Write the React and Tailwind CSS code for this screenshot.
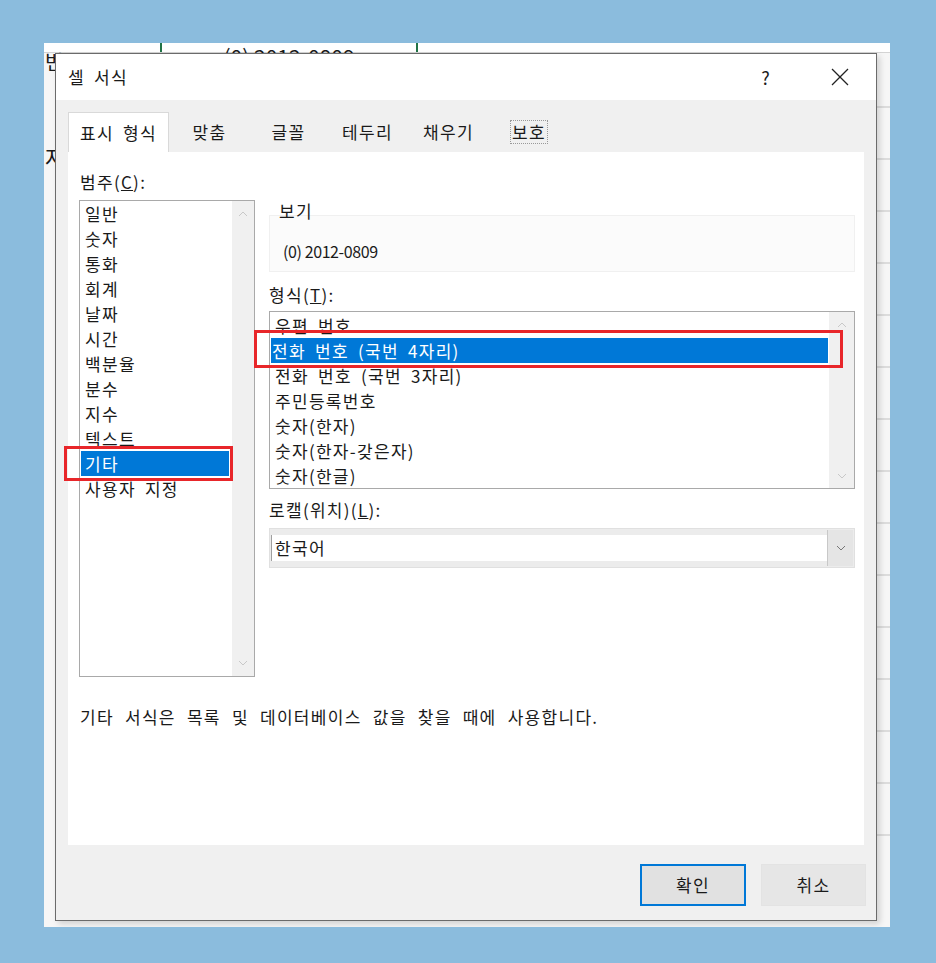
import React from "react";

const Chevron = ({ dir = "down", className = "" }) => (
  <svg width="10" height="6" viewBox="0 0 10 6" className={className}>
    {dir === "down" ? (
      <polyline points="1,1 5,5 9,1" fill="none" stroke="currentColor" strokeWidth="1" />
    ) : (
      <polyline points="1,5 5,1 9,5" fill="none" stroke="currentColor" strokeWidth="1" />
    )}
  </svg>
);

const categories = ["일반", "숫자", "통화", "회계", "날짜", "시간", "백분율", "분수", "지수", "텍스트", "기타", "사용자 지정"];
const formats = ["우편 번호", "전화 번호 (국번 4자리)", "전화 번호 (국번 3자리)", "주민등록번호", "숫자(한자)", "숫자(한자-갖은자)", "숫자(한글)"];

export default function App() {
  return (
    <div className="w-[936px] h-[963px] bg-[#8bbcdd] pt-[43px] pl-[44px] font-['Noto_Sans_CJK_KR','Noto_Sans',sans-serif] text-[17px] text-[#1a1a1a] tracking-[1.3px] [word-spacing:4px]">
      {/* Excel sheet behind */}
      <div className="relative w-[846px] h-[884px] bg-[#f6f6f6] overflow-hidden">
        <div className="flex h-[10px] bg-white border-b border-[#d4d4d4]">
          <div className="w-[118px] border-r border-[#d4d4d4] text-[20px] leading-[40px] pl-[1px] -mt-[1px]">번호</div>
          <div className="w-[258px] border-r-2 border-[#217346] border-l-2 border-l-[#217346] -ml-[2px] text-center text-[21px] leading-[26px] tracking-normal [word-spacing:0px]">(0) 2012-0809</div>
          <div className="flex-1"></div>
        </div>
        <div className="w-[11px] h-[88px]"></div>
        <div className="w-[11px] text-[22px] leading-[30px] pl-[1px]">자</div>
        <div className="flex flex-col gap-[50px] ml-[833px] mt-[-65px]">
          {[0, 1, 2, 3, 4, 5, 6, 7, 8, 9, 10, 11, 12, 13, 14].map((i) => (
            <div key={i} className="h-[2px] bg-[#dcdcdc]"></div>
          ))}
        </div>

        {/* Dialog */}
        <div className="absolute left-[11px] top-[10px] w-[822px] h-[868px] border border-[#6b6b6b] bg-[#f0f0f0] flex flex-col shadow-[3px_3px_6px_rgba(0,0,0,0.15)]">
          {/* Title bar */}
          <div className="h-[46px] bg-white flex items-center pl-[12px] shrink-0">
            <span className="leading-[22px]">셀 서식</span>
            <span className="ml-auto mr-[60px] text-[18px] leading-[22px]">?</span>
            <svg width="18" height="18" viewBox="0 0 18 18" className="mr-[27px]">
              <line x1="1" y1="1" x2="17" y2="17" stroke="#222" strokeWidth="1.3" />
              <line x1="17" y1="1" x2="1" y2="17" stroke="#222" strokeWidth="1.3" />
            </svg>
          </div>

          {/* Tabs */}
          <div className="h-[52px] shrink-0 pl-[12px] flex items-end">
            <div className="w-[101px] h-[40px] bg-white border border-b-0 border-[#d9d9d9] flex items-center justify-center">표시 형식</div>
            <div className="w-[81px] h-[40px] flex items-center justify-center">맞춤</div>
            <div className="w-[77px] h-[40px] flex items-center justify-center">글꼴</div>
            <div className="w-[81px] h-[40px] flex items-center justify-center">테두리</div>
            <div className="w-[81px] h-[40px] flex items-center justify-center">채우기</div>
            <div className="w-[80px] h-[40px] flex items-center justify-center">
              <span className="border border-dotted border-[#999] leading-[22px] px-[1px]">보호</span>
            </div>
          </div>

          {/* Content panel */}
          <div className="h-[693px] shrink-0 px-[12px]">
            <div className="relative h-full bg-white pt-[19px]">
              <div className="flex">
                {/* Left column */}
                <div className="ml-[11px] w-[176px]">
                  <div className="h-[22px] leading-[22px] pl-[1px]">
                    범주(<span className="underline">C</span>):
                  </div>
                  <div className="mt-[7px] h-[477px] border border-[#a9a9a9] flex">
                    <div className="flex-1 pl-[1px] pr-[3px]">
                      {categories.map((c) => (
                        <div
                          key={c}
                          className={`h-[25px] leading-[25px] pl-[4px] whitespace-nowrap ${c === "기타" ? "bg-[#0078d7] text-white" : ""}`}
                        >
                          {c}
                        </div>
                      ))}
                    </div>
                    <div className="w-[22px] bg-[#f0f0f0] flex flex-col items-center justify-between py-[10px] text-[#c8c8c8]">
                      <Chevron dir="up" />
                      <Chevron dir="down" />
                    </div>
                  </div>
                </div>

                {/* Right column */}
                <div className="ml-[14px] w-[586px] pt-[29px]">
                  <div className="relative z-10 h-[22px] leading-[22px] pl-[10px]">보기</div>
                  <div className="-mt-[7px] h-[57px] bg-[#fbfbfb] border border-[#f0f0f0] pl-[13px] pt-[24px] leading-[22px] text-[16px] tracking-[-0.4px] [word-spacing:0px]">
                    (0) 2012-0809
                  </div>
                  <div className="mt-[12px] h-[22px] leading-[22px]">
                    형식(<span className="underline">T</span>):
                  </div>
                  <div className="mt-[5px] h-[178px] border border-[#a9a9a9] flex overflow-hidden">
                    <div className="flex-1 pt-[1px] pl-[1px] pr-[1px]">
                      {formats.map((f, i) => (
                        <div
                          key={f}
                          className={`h-[25px] leading-[25px] whitespace-nowrap ${i === 1 ? "bg-[#0078d7] text-white pl-[1px]" : "pl-[4px]"}`}
                        >
                          {f}
                        </div>
                      ))}
                    </div>
                    <div className="w-[25px] bg-[#f0f0f0] flex flex-col items-center justify-between pt-[10px] pb-[9px] text-[#c8c8c8]">
                      <Chevron dir="up" />
                      <Chevron dir="down" />
                    </div>
                  </div>
                  <div className="mt-[10px] h-[22px] leading-[22px]">
                    로캘(위치)(<span className="underline">L</span>):
                  </div>
                  <div className="mt-[7px] h-[40px] bg-[#ececec] border border-[#e0e0e0] flex p-[1px]">
                    <div className="flex-1 bg-white border-l border-[#a0a0a0] my-[5px] flex items-center pl-[3px] leading-[22px]">한국어</div>
                    <div className="w-[26px] bg-[#e5e5e5] border-l border-[#c8c8c8] flex items-center justify-center text-[#777]">
                      <Chevron dir="down" />
                    </div>
                  </div>
                </div>
              </div>

              <div className="mt-[29px] pl-[12px] h-[22px] leading-[22px] [word-spacing:6px]">
                기타 서식은 목록 및 데이터베이스 값을 찾을 때에 사용합니다.
              </div>

              {/* Red highlight boxes */}
              <div className="absolute left-[-4px] top-[294px] w-[169px] h-[35px] border-[3px] border-[#e8262a] pointer-events-none"></div>
              <div className="absolute left-[186px] top-[178px] w-[589px] h-[38px] border-[3px] border-[#e8262a] pointer-events-none"></div>
            </div>
          </div>

          {/* Bottom buttons */}
          <div className="flex-1 flex justify-end items-start pt-[19px] pr-[10px]">
            <div className="w-[106px] h-[42px] border-2 border-[#0078d7] bg-[#e1e1e1] flex items-center justify-center">확인</div>
            <div className="ml-[15px] w-[105px] h-[42px] border border-[#e3e3e3] bg-[#e6e6e6] flex items-center justify-center">취소</div>
          </div>
        </div>
      </div>
    </div>
  );
}
